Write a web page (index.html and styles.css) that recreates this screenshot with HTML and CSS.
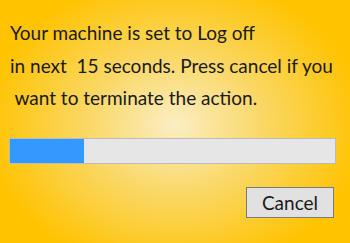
FILE: index.html
```html
<!DOCTYPE html>
<html>
<head>
<meta charset="utf-8">
<link rel="stylesheet" href="styles.css">
</head>
<body>
<div class="dialog">
  <div class="message">
    <p class="line">Your machine is set to Log off</p>
    <p class="line">in next&nbsp; 15 seconds. Press cancel if you</p>
    <p class="line">&nbsp;want to terminate the action.</p>
  </div>
  <div class="progress"><div class="progress-fill" style="width: 74px"></div></div>
  <div class="actions"><button class="btn">Cancel</button></div>
</div>
</body>
</html>
```

FILE: styles.css
```css
html, body {
  margin: 0;
  padding: 0;
}
body {
  width: 350px;
  height: 243px;
  overflow: hidden;
  background: radial-gradient(ellipse 190px 150px at 175px 125px, #fbeec4 0%, #fad868 45%, #ffc300 100%);
  font-family: "Lato", "Open Sans", sans-serif;
  color: #1a1a1a;
}
.dialog {
  display: flex;
  flex-direction: column;
  padding: 17px 14px 0 10px;
}
.message {
  display: flex;
  flex-direction: column;
}
.line {
  margin: 0;
  font-size: 19px;
  line-height: 32.5px;
  white-space: pre;
}
.progress {
  margin-top: 23px;
  height: 24px;
  margin-left: -1px;
  background: #e6e6e6;
  border: 1px solid #bcbcbc;
  display: flex;
}
.progress-fill {
  background: #3399ff;
  height: 100%;
}
.actions {
  display: flex;
  justify-content: flex-end;
  margin-top: 23px;
  padding-right: 2px;
}
.btn {
  width: 88px;
  height: 31px;
  background: #e1e1e1;
  border: 1px solid #7a7a7a;
  font-family: inherit;
  font-size: 19px;
  color: #1a1a1a;
  padding: 0;
}
```
